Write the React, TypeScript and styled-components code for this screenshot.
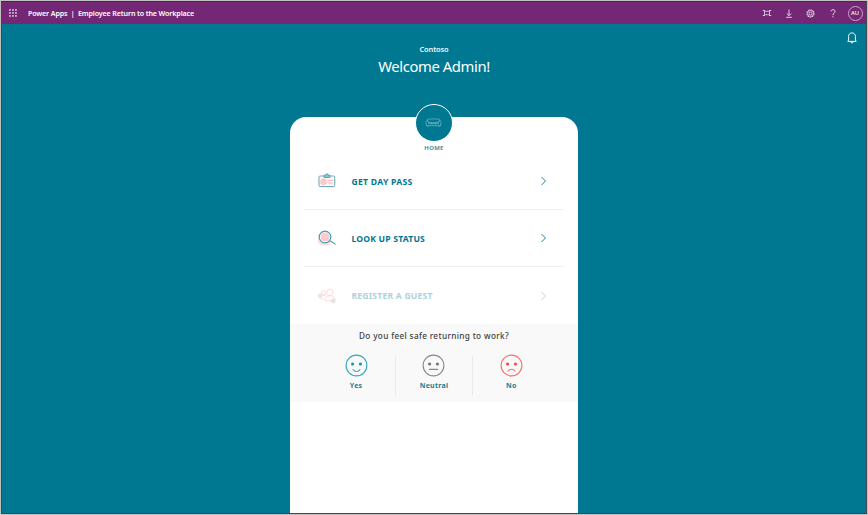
import React from "react";
import styled, { createGlobalStyle } from "styled-components";

const TEAL = "#007891";

const GlobalStyle = createGlobalStyle`
  * { box-sizing: border-box; }
  body { margin: 0; font-family: "Noto Sans", "Open Sans", sans-serif; }
  svg { display: block; fill: none; flex: none; }
`;

const Frame = styled.div`
  width: 868px;
  height: 515px;
  border: 1px solid #c3c0c2;
  overflow: hidden;
`;

const Window = styled.div`
  height: 100%;
  border: 1px solid #45454c;
  border-top-color: #4f2350;
  border-left-color: #24505c;
  background: ${TEAL};
  display: flex;
  flex-direction: column;
`;

const TopBar = styled.header`
  height: 22px;
  flex: none;
  display: flex;
  align-items: center;
  justify-content: space-between;
  background: #742774;
  color: #fff;
  padding: 0 3.5px 0 7px;
`;

const Brand = styled.div`
  display: flex;
  align-items: center;
  font-size: 7.1px;
  font-weight: 600;
  line-height: 10px;
  white-space: pre;
`;

const BrandText = styled.span`
  margin-left: 11px;
  letter-spacing: -0.13px;
`;

const Tools = styled.div`
  display: flex;
  align-items: center;
`;

const Tool = styled.div<{ $width: number }>`
  width: ${(p) => p.$width}px;
  display: flex;
  justify-content: center;
`;

const Avatar = styled.div`
  width: 15px;
  height: 15px;
  margin-left: 4px;
  border: 1px solid #c9a5c9;
  border-radius: 50%;
  font-size: 5.8px;
  font-weight: 500;
  line-height: 13px;
  text-align: center;
`;

const Stage = styled.main`
  flex: 1;
  min-height: 0;
  display: flex;
  flex-direction: column;
  align-items: center;
`;

const Notice = styled.div`
  align-self: flex-end;
  height: 20px;
  padding: 8px 9px 0 0;
`;

const Company = styled.div`
  font-size: 7.4px;
  font-weight: 600;
  line-height: 10px;
  letter-spacing: -0.1px;
  color: #eff8f9;
`;

const Welcome = styled.h1`
  margin: 2px 0 0;
  font-size: 14.8px;
  font-weight: 400;
  line-height: 20px;
  letter-spacing: -0.4px;
  color: #fff;
`;

const Card = styled.section`
  width: 288px;
  flex: 1;
  margin-top: 41px;
  border-radius: 16px 16px 0 0;
  background: #fff;
  display: flex;
  flex-direction: column;
`;

const HomeBadge = styled.div`
  width: 38px;
  height: 38px;
  margin: -13px auto 0;
  flex: none;
  border: 1.5px solid #fff;
  border-radius: 50%;
  background: ${TEAL};
  display: flex;
  align-items: center;
  justify-content: center;
  padding-right: 1px;
`;

const HomeLabel = styled.div`
  margin: 2px 0 -1px;
  text-align: center;
  font-size: 6px;
  line-height: 9px;
  font-weight: 600;
  letter-spacing: 0.3px;
  color: #2c7f92;
`;

const Menu = styled.nav`
  margin: 0 14px;
`;

const MenuRow = styled.div<{ $height: number; $faded?: boolean }>`
  height: ${(p) => p.$height}px;
  display: flex;
  align-items: center;
  padding: 0 16px 0 13px;
  color: ${(p) => (p.$faded ? "#acd3da" : TEAL)};
  & + & { border-top: 1px solid #f0f0f0; }
`;

const MenuText = styled.span<{ $spacing: number; $drop?: number }>`
  flex: 1;
  margin-left: 14.5px;
  padding-top: ${(p) => p.$drop ?? 2}px;
  font-size: 8.6px;
  font-weight: 700;
  line-height: 12px;
  letter-spacing: ${(p) => p.$spacing}px;
`;

const Survey = styled.section`
  height: 78px;
  background: #f9f9f9;
  padding-top: 5px;
`;

const Question = styled.div`
  text-align: center;
  font-size: 8.2px;
  line-height: 13px;
  font-weight: 500;
  letter-spacing: 0.35px;
  color: #404040;
`;

const Choices = styled.div`
  display: flex;
  justify-content: center;
  margin: 14px 1px 0 0;
`;

const Choice = styled.div`
  width: 77.4px;
  height: 39px;
  display: flex;
  flex-direction: column;
  align-items: center;
  & + & { border-left: 1px solid #e9e9e9; }
  & > svg { margin-top: -2px; }
`;

const ChoiceText = styled.span`
  margin-top: 4px;
  font-size: 7px;
  line-height: 10px;
  font-weight: 700;
  letter-spacing: 0.25px;
  color: #257d91;
`;

const Chevron = () => (
  <svg width="8" height="10" viewBox="0 0 8 10" stroke="currentColor" strokeWidth="0.9">
    <path d="M1.5 1 5.5 5 1.5 9" />
  </svg>
);

const Waffle = () => (
  <svg width="8" height="8" viewBox="0 0 8 8">
    {[0, 1, 2].map((r) =>
      [0, 1, 2].map((c) => (
        <rect key={`${r}${c}`} x={0.2 + c * 3} y={0.2 + r * 3} width="1.5" height="1.5" fill="#f3e9f3" />
      ))
    )}
  </svg>
);

const Fit = () => (
  <svg width="10" height="8" viewBox="0 0 10 8" stroke="#ead9ea" strokeWidth="0.8">
    <path d="M2.5 1v6M7.5 1v6M.7 1.5h1.8l.8.8h3.4l.8-.8h1.8M.7 6.5h1.8l.8-.8h3.4l.8.8h1.8" />
  </svg>
);

const Download = () => (
  <svg width="8" height="9" viewBox="0 0 8 9" stroke="#eddfed" strokeWidth="0.9">
    <path d="M4 .5v6M1.8 4.5 4 6.7l2.2-2.2M1.2 8.3h5.6" />
  </svg>
);

const Gear = () => (
  <svg width="9" height="9" viewBox="0 0 9 9" stroke="#dfc9df">
    <circle cx="4.5" cy="4.5" r="3.5" strokeWidth="1.1" strokeDasharray="1.8 0.45" />
    <circle cx="4.5" cy="4.5" r="2.8" strokeWidth="0.6" />
    <circle cx="4.5" cy="4.5" r="1.4" strokeWidth="0.9" />
  </svg>
);

const Help = () => (
  <svg width="6" height="9" viewBox="0 0 6 9" stroke="#eddfed" strokeWidth="1">
    <path d="M1 2.4C1 1.2 1.8.7 3 .7s2 .6 2 1.7C5 4 3 4 3 6.2M3 7.2v1.1" />
  </svg>
);

const Bell = () => (
  <svg width="10" height="12" viewBox="0 0 10 12" stroke="#f2fafb" strokeWidth="1">
    <path d="M.8 9.4h8.4L8.4 8V4.4C8.4 2.2 7 .9 5 .9S1.6 2.2 1.6 4.4V8zM3.6 9.8c.2 1.5 2.6 1.5 2.8 0" />
  </svg>
);

const Sofa = () => (
  <svg width="17" height="10" viewBox="0 0 17 10" stroke="#8fc3cd" strokeWidth="0.6">
    <path d="M2.3 3V2.2c0-.8.5-1.2 1.2-1.2h10c.8 0 1.2.5 1.2 1.2V3M2.3 3C.4 2.8.3 4.8 1.3 5v2.7h14.4V5c1-.2.9-2.2-1-2-1 0-1.3.7-1.3 1.7v1H3.6v-1C3.6 3.7 3.3 3 2.3 3zM3.5 3.2l1.3 1.5h7.4l1.3-1.5M3 8v1M14 8v1M6.5 4.7v1M10.5 4.7v1" />
  </svg>
);

const BadgeIcon = () => (
  <svg width="20" height="16" viewBox="0 0 20 16">
    <path d="M2.5 5C.2 5.5.6 12.7 3 13.8c4 .7 9-.4 13 .8 1.5-.7 3-5 1.8-9z" fill="#fff0f0" stroke="#ffc7c7" strokeWidth="0.5" />
    <rect x="2" y="3" width="15.7" height="10.5" rx="1" fill="#fff3f3" stroke="#5ba7b5" strokeWidth="0.9" />
    <path d="M7 4.5V2.2h1.8c0-1.9 2.5-1.9 2.5 0H13v2.3z" fill="#8dc3cd" stroke="#4a9eae" strokeWidth="0.8" />
    <g stroke="#f8a5a5" strokeWidth="0.8">
      <circle cx="6.5" cy="8.8" r="2.7" fill="#ffecec" />
      <circle cx="6.5" cy="8.1" r="0.9" />
      <path d="M4.8 10.8c.5-1.8 2.9-1.8 3.4 0M10.5 7.5h5.2M10.5 10h5.2" />
    </g>
  </svg>
);

const SearchIcon = () => (
  <svg width="20" height="18" viewBox="0 0 20 18">
    <path d="M1.5 6 .8 13c2 4 8 3.7 12.3 2.8l.8-8.6z" fill="#ffdcdc" />
    <circle cx="8" cy="8" r="5.6" fill="#fff" />
    <circle cx="8" cy="8" r="4.5" fill="#ffcaca" />
    <circle cx="8" cy="8" r="5.8" stroke="#43a0b2" strokeWidth="1.2" />
    <path d="m12.4 12 1.3.3 5 3.1" stroke="#43a0b2" strokeWidth="1.1" />
  </svg>
);

const GuestIcon = () => (
  <svg width="20" height="18" viewBox="0 0 20 18" stroke="#ffd9d9" strokeWidth="1">
    <circle cx="3" cy="8.8" r="2.3" fill="#d7edf0" stroke="none" />
    <circle cx="16.2" cy="14" r="2.4" fill="#d7edf0" stroke="none" />
    <circle cx="6.5" cy="5.8" r="2.1" />
    <path d="M7.5 12H3.3c-1-2.2.8-3.8 3.2-3.8 1.2 0 2 .2 2.5.8" />
    <circle cx="13" cy="5.3" r="3.2" />
    <path d="M8.6 13.8c-1.2-3 1-5 4.4-5s5.5 2 4.6 5z" />
    <path d="M16.2 12.7v2.6M14.9 14h2.6" stroke="#cbe7eb" strokeWidth="0.6" />
  </svg>
);

const Face = ({ color, eyes, mouth }: { color: string; eyes: string; mouth: string }) => (
  <svg width="23" height="23" viewBox="0 0 23 23">
    <circle cx="11.5" cy="11.5" r="10.4" stroke={color} strokeWidth="1.1" />
    <circle cx="7.6" cy="10" r="1.6" fill={eyes} />
    <circle cx="15.4" cy="10" r="1.6" fill={eyes} />
    <path d={mouth} stroke={color} strokeWidth="1.1" strokeLinecap="round" />
  </svg>
);

const choices = [
  { label: "Yes", color: "#35a8bb", eyes: "#1596ac", mouth: "M8 15.5c1.5 2.6 5.5 2.6 7 0" },
  { label: "Neutral", color: "#8b8b8b", eyes: "#777", mouth: "M7.5 15.4h8" },
  { label: "No", color: "#fb6f6b", eyes: "#fa4842", mouth: "M8 17.2c1.5-2.6 5.5-2.6 7 0" },
];

export default function App() {
  return (
    <Frame>
      <GlobalStyle />
      <Window>
        <TopBar>
          <Brand>
            <Waffle />
            <BrandText>Power Apps  |  Employee Return to the Workplace</BrandText>
          </Brand>
          <Tools>
            <Tool $width={22}><Fit /></Tool>
            <Tool $width={22}><Download /></Tool>
            <Tool $width={22}><Gear /></Tool>
            <Tool $width={22}><Help /></Tool>
            <Avatar>AU</Avatar>
          </Tools>
        </TopBar>
        <Stage>
          <Notice><Bell /></Notice>
          <Company>Contoso</Company>
          <Welcome>Welcome Admin!</Welcome>
          <Card>
            <HomeBadge><Sofa /></HomeBadge>
            <HomeLabel>HOME</HomeLabel>
            <Menu>
              <MenuRow $height={57}><BadgeIcon /><MenuText $spacing={0.27} $drop={3}>GET DAY PASS</MenuText><Chevron /></MenuRow>
              <MenuRow $height={57}><SearchIcon /><MenuText $spacing={0.19}>LOOK UP STATUS</MenuText><Chevron /></MenuRow>
              <MenuRow $height={58} $faded><GuestIcon /><MenuText $spacing={0.21} $drop={1}>REGISTER A GUEST</MenuText><Chevron /></MenuRow>
            </Menu>
            <Survey>
              <Question>Do you feel safe returning to work?</Question>
              <Choices>
                {choices.map(({ label, ...face }) => (
                  <Choice key={label}>
                    <Face {...face} />
                    <ChoiceText>{label}</ChoiceText>
                  </Choice>
                ))}
              </Choices>
            </Survey>
          </Card>
        </Stage>
      </Window>
    </Frame>
  );
}
